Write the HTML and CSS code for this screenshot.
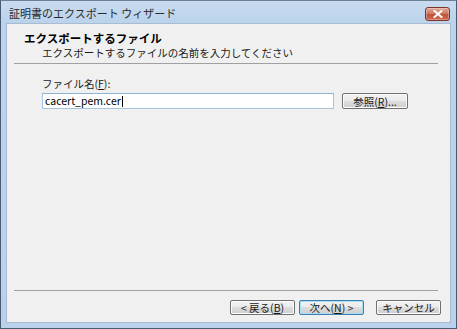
FILE: index.html
```html
<!DOCTYPE html>
<html lang="ja">
<head>
  <meta charset="UTF-8" />
  <title>証明書のエクスポート ウィザード</title>
  <link rel="stylesheet" href="styles.css">
</head>
<body>
  <div class="window">
    <div class="titlebar">
      <span class="title">証明書のエクスポート ウィザード</span>
      <span class="close">
        <svg width="10" height="8" viewBox="0 0 10 8">
          <path d="M1.5 1 L8.5 7 M8.5 1 L1.5 7" stroke="#fff" stroke-width="2" stroke-linecap="square" />
        </svg>
      </span>
    </div>
    <div class="client">
      <div class="header">
        <div class="heading">エクスポートするファイル</div>
        <div class="subheading">エクスポートするファイルの名前を入力してください</div>
      </div>
      <hr class="sep top">
      <div class="body">
        <label class="label" for="file">ファイル名(<u>F</u>):</label>
        <div class="filerow">
          <div class="input" id="file">cacert_pem.cer<span class="caret"></span></div>
          <button class="btn browse">参照(<u>R</u>)...</button>
        </div>
      </div>
      <hr class="sep bottom">
      <div class="footer">
        <button class="btn">&lt; 戻る(<u>B</u>)</button>
        <button class="btn default">次へ(<u>N</u>) &gt;</button>
        <button class="btn cancel">キャンセル</button>
      </div>
    </div>
  </div>
</body>
</html>
```

FILE: styles.css
```css
body { margin: 0; font-family: "Noto Sans CJK JP", "DejaVu Sans", sans-serif; font-size: 11px; color: #000; }
.window { width: 457px; height: 329px; box-sizing: border-box; border: 1px solid #4a5a70; border-top-color: #6d7f96;
  background: linear-gradient(#c9dcf0, #bcd3ec 20px, #b9d1ea); padding: 0 5px 5px 5px; display: flex; flex-direction: column; }
.titlebar { height: 22px; display: flex; align-items: center; justify-content: space-between; padding: 0 1px 0 3px; }
.title { font-size: 11px; color: #2a2a2a; margin-top: 1px; }
.close { width: 23px; height: 12px; margin-top: 4px; border: 1px solid #7a3428; border-radius: 3px; display: flex; align-items: center; justify-content: center;
  background: linear-gradient(#e2a898, #cf7a64 45%, #c0533c 55%, #cc6a52); box-shadow: inset 0 0 0 1px rgba(255,255,255,0.3); }
.client { flex: 1; background: #f0f0f0; border: 1px solid #a8bbd2; display: flex; flex-direction: column; }
.header { padding: 7px 0 0 17px; height: 32px; }
.heading { font-weight: bold; font-size: 11.5px; line-height: 15px; }
.subheading { padding-left: 18px; line-height: 14px; font-size: 10.5px; color: #1a1a1a; }
.sep { border: 0; height: 1px; background: #a0a0a0; margin: 0 12px 0 7px; }
.body { flex: 1; padding: 13px 0 0 35px; }
.label { display: block; font-size: 10.5px; line-height: 14px; margin-bottom: 2px; color: #1a1a1a; }
.filerow { display: flex; align-items: center; gap: 8px; }
.input { width: 292px; height: 16px; box-sizing: border-box; border: 1px solid #a5c4de; border-top-color: #8eb2d2; background: #fff;
  font-size: 10.5px; line-height: 14px; padding-left: 2px; display: flex; align-items: center; }
.caret { display: inline-block; width: 1px; height: 11px; background: #000; margin-left: 1px; }
.btn { height: 16px; box-sizing: border-box; border: 1px solid #707070; border-radius: 2px; padding: 0; font-family: inherit; font-size: 10.5px; line-height: 13px; color: #1a1a1a;
  background: linear-gradient(#f2f2f2, #ebebeb 50%, #dddddd 50%, #cfcfcf); box-shadow: inset 0 0 0 1px #fbfbfb; width: 65px; }
.browse { width: 66px; }
.footer { height: 31px; display: flex; justify-content: flex-end; align-items: flex-start; padding: 9px 9px 0 0; box-sizing: border-box; gap: 4px; }
.footer .btn { height: 15px; }
.default { border-color: #3c7fb1; box-shadow: inset 0 0 0 1px #a7dcf5; }
.cancel { margin-left: 8px; }
```
